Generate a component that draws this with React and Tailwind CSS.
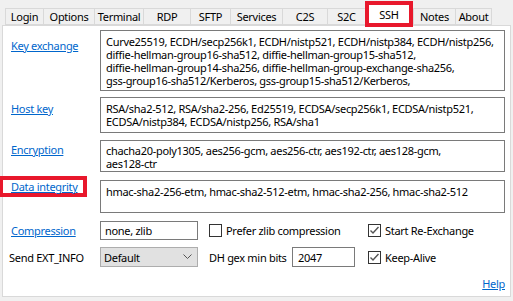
import { useState } from "react";

const tabs = ["Login", "Options", "Terminal", "RDP", "SFTP", "Services", "C2S", "S2C", "SSH", "Notes", "About"];
const tabWidths = [38, 51, 49, 47, 40, 52, 45, 38, 48, 42, 37];

const Check = ({ checked }) => (
  <span className="w-[13px] h-[13px] border border-[#333] bg-white flex items-center justify-center shrink-0">
    {checked && (
      <svg width="11" height="11" viewBox="0 0 11 11">
        <path d="M1.5 5.5 L4 8 L9.5 2" fill="none" stroke="#555" strokeWidth="1.4" />
      </svg>
    )}
  </span>
);

const LinkLabel = ({ children, pt }) => (
  <div className={`w-[97px] shrink-0 pl-[8px] ${pt}`}>
    <a className="text-[#0066cc] underline cursor-pointer">{children}</a>
  </div>
);

const App = () => {
  const [active] = useState("SSH");
  const [preferZlib, setPreferZlib] = useState(false);
  const [reExchange, setReExchange] = useState(true);
  const [keepAlive, setKeepAlive] = useState(true);

  return (
    <div
      className="w-[513px] h-[301px] bg-[#f0f0f0] text-black text-[11px] leading-[13px] tracking-[-0.3px] whitespace-nowrap overflow-hidden"
      style={{ fontFamily: '"Noto Sans", "Liberation Sans", sans-serif' }}
    >
      {/* Tabs */}
      <div className="flex h-[25px] items-end pl-[5px]">
        {tabs.map((t, i) =>
          t === active ? (
            <div
              key={t}
              className="relative h-[26px] bg-white flex items-center justify-center -mb-[2px] z-10 border-[4px] border-[#e8182c]"
              style={{ width: tabWidths[i] }}
            >
              {t}
            </div>
          ) : (
            <div
              key={t}
              className="h-[17px] border border-[#d9d9d9] border-r-0 last:border-r bg-[#f0f0f0] flex items-center justify-center"
              style={{ width: tabWidths[i] }}
            >
              {t}
            </div>
          )
        )}
      </div>

      {/* Panel */}
      <div className="mx-[2px] h-[272px] bg-white border border-[#d9d9d9] relative pt-[4px] pr-[5px]">
        <div className="flex">
          <LinkLabel pt="pt-[9px]">Key exchange</LinkLabel>
          <div className="flex-1 h-[61px] border border-[#7a7a7a] px-[5px] pt-[4px]">
            Curve25519, ECDH/secp256k1, ECDH/nistp521, ECDH/nistp384, ECDH/nistp256,
            <br />
            diffie-hellman-group16-sha512, diffie-hellman-group15-sha512,
            <br />
            diffie-hellman-group14-sha256, diffie-hellman-group-exchange-sha256,
            <br />
            gss-group16-sha512/Kerberos, gss-group15-sha512/Kerberos,
          </div>
        </div>

        <div className="flex mt-[6px]">
          <LinkLabel pt="pt-[5px]">Host key</LinkLabel>
          <div className="flex-1 h-[36px] border border-[#7a7a7a] px-[5px] pt-[4px]">
            RSA/sha2-512, RSA/sha2-256, Ed25519, ECDSA/secp256k1, ECDSA/nistp521,
            <br />
            ECDSA/nistp384, ECDSA/nistp256, RSA/sha1
          </div>
        </div>

        <div className="flex mt-[7px]">
          <LinkLabel pt="pt-[3px]">Encryption</LinkLabel>
          <div className="flex-1 h-[32px] border border-[#7a7a7a] px-[5px] pt-[3px]">
            chacha20-poly1305, aes256-gcm, aes256-ctr, aes192-ctr, aes128-gcm,
            <br />
            aes128-ctr
          </div>
        </div>

        <div className="flex mt-[8px]">
          <div className="w-[97px] shrink-0 -ml-[4px] -mt-[4px]">
            <div className="w-[88px] h-[21px] border-[4px] border-[#e8182c] pl-[8px] flex items-center">
              <a className="text-[#0066cc] underline cursor-pointer">Data integrity</a>
            </div>
          </div>
          <div className="flex-1 h-[33px] border border-[#7a7a7a] px-[5px] pt-[4px] ml-[4px]">
            hmac-sha2-256-etm, hmac-sha2-512-etm, hmac-sha2-256, hmac-sha2-512
          </div>
        </div>

        <div className="flex items-center mt-[8px] h-[19px]">
          <div className="w-[97px] shrink-0 pl-[8px]">
            <a className="text-[#0066cc] underline cursor-pointer">Compression</a>
          </div>
          <div className="w-[98px] h-[19px] border border-[#7a7a7a] px-[4px] flex items-center">none, zlib</div>
          <label className="flex items-center gap-[4px] ml-[11px] w-[159px]" onClick={() => setPreferZlib(!preferZlib)}>
            <Check checked={preferZlib} />
            <span>Prefer zlib compression</span>
          </label>
          <label className="flex items-center gap-[4px]" onClick={() => setReExchange(!reExchange)}>
            <Check checked={reExchange} />
            <span>Start Re-Exchange</span>
          </label>
        </div>

        <div className="flex items-center mt-[7px] h-[20px]">
          <div className="w-[97px] shrink-0 pl-[6px]">Send EXT_INFO</div>
          <div className="w-[98px] h-[20px] border border-[#adadad] bg-[#e1e1e1] pl-[3px] pr-[5px] flex items-center justify-between">
            <span>Default</span>
            <svg width="9" height="6" viewBox="0 0 9 6">
              <path d="M0.5 0.5 L4.5 4.5 L8.5 0.5" fill="none" stroke="#555" strokeWidth="1" />
            </svg>
          </div>
          <div className="ml-[11px] w-[83px]">DH gex min bits</div>
          <div className="w-[63px] h-[20px] border border-[#7a7a7a] px-[5px] flex items-center">2047</div>
          <label className="flex items-center gap-[4px] ml-[13px]" onClick={() => setKeepAlive(!keepAlive)}>
            <Check checked={keepAlive} />
            <span>Keep-Alive</span>
          </label>
        </div>

        <div className="absolute right-[5px] bottom-[6px]">
          <a className="text-[#0066cc] underline cursor-pointer">Help</a>
        </div>
      </div>
    </div>
  );
};

export default App;
